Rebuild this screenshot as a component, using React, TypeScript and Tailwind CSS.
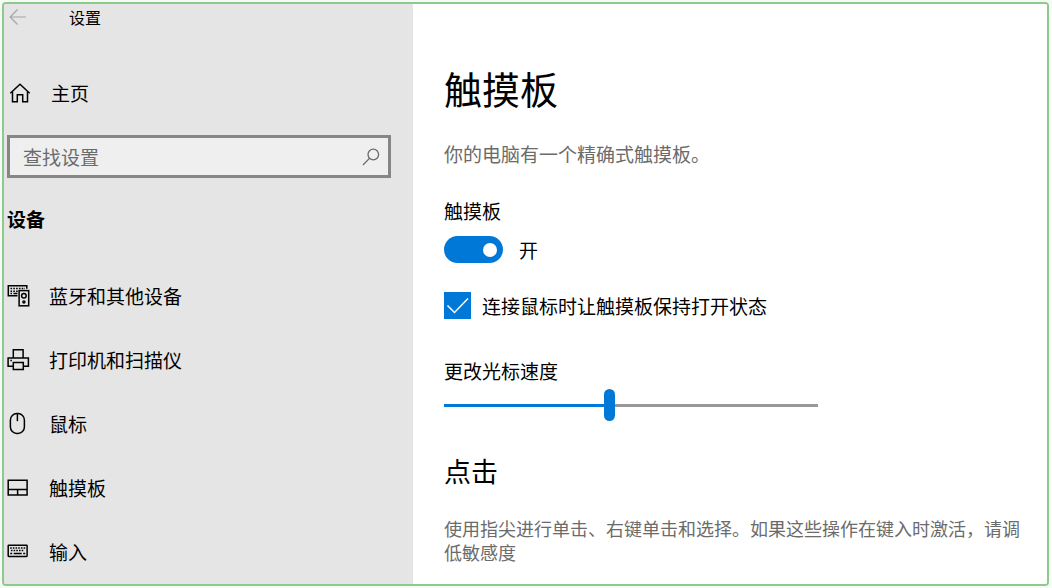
import React, { useState } from "react";

interface IconProps {
  className?: string;
}

const strokeProps = {
  fill: "none",
  stroke: "currentColor",
  strokeWidth: 1.5,
  "aria-hidden": true,
};

const BackIcon: React.FC<IconProps> = ({ className }) => (
  <svg viewBox="0 0 18 18" className={className} {...strokeProps} strokeWidth={1.2}>
    <path d="M17 9H1.5M8.5 1.5 1.2 9l7.3 7.5" />
  </svg>
);

const HomeIcon: React.FC<IconProps> = ({ className }) => (
  <svg viewBox="0 0 22 22" className={className} {...strokeProps}>
    <path d="M1.3 11.2 11 2.2l9.7 9M3.5 9.5v10.2h4.8v-6.9h5.4v6.9h4.8V9.5" />
  </svg>
);

const SearchIcon: React.FC<IconProps> = ({ className }) => (
  <svg viewBox="0 0 18 18" className={className} {...strokeProps} strokeWidth={1.3}>
    <circle cx="11.3" cy="6.5" r="5.3" />
    <path d="M7.4 10.4 1 17" />
  </svg>
);

const DevicesIcon: React.FC<IconProps> = ({ className }) => (
  <svg viewBox="0 0 24 24" className={className} {...strokeProps}>
    <path d="M10.5 11.8H1.3V1.8h18.5v3" />
    <path d="M3.5 4.5H18M3.5 7.2H11" strokeDasharray="1.6 1.2" />
    <path d="M3.5 9.5H5M6.5 9.5h4" />
    <rect x="12.1" y="6.6" width="9.6" height="15.2" />
    <circle cx="16.9" cy="11.8" r="2.3" />
    <circle cx="16.9" cy="17.9" r="1" />
  </svg>
);

const PrinterIcon: React.FC<IconProps> = ({ className }) => (
  <svg viewBox="0 0 24 24" className={className} {...strokeProps}>
    <path d="M6.3 10V1.7h9.8V10" />
    <path d="M6.3 18.3H1.1V10h20.3v8.3h-5.1" />
    <path d="M6.3 14.6h10v6.9h-10z" />
    <path d="M3.3 12.5h1.6" />
  </svg>
);

const MouseIcon: React.FC<IconProps> = ({ className }) => (
  <svg viewBox="0 0 24 24" className={className} {...strokeProps}>
    <rect x="3.4" y="1.6" width="14" height="19.8" rx="6.4" />
    <path d="M10.4 1.8v7.4" />
  </svg>
);

const TouchpadIcon: React.FC<IconProps> = ({ className }) => (
  <svg viewBox="0 0 24 24" className={className} {...strokeProps}>
    <path d="M1.2 4.2h18.9v14.7H1.2zM1.2 13.6h18.9M10.6 13.6v5.3" />
  </svg>
);

const KeyboardIcon: React.FC<IconProps> = ({ className }) => (
  <svg viewBox="0 0 24 24" className={className} {...strokeProps}>
    <rect x="1.2" y="5.2" width="18.9" height="11.2" rx="0.6" />
    <path d="M3.1 8h15.2M3.9 10.6h13.6" strokeDasharray="1.6 1.1" />
    <path d="M3.2 13.5h2M6.7 13.5h8M16.2 13.5h2" />
  </svg>
);

const navItems = [
  { label: "蓝牙和其他设备", Icon: DevicesIcon },
  { label: "打印机和扫描仪", Icon: PrinterIcon },
  { label: "鼠标", Icon: MouseIcon },
  { label: "触摸板", Icon: TouchpadIcon },
  { label: "输入", Icon: KeyboardIcon },
];

const Sidebar: React.FC = () => (
  <aside className="w-[409px] shrink-0 bg-[#e5e5e5]">
    <header className="flex h-[26px] items-center pl-[5px]">
      <button type="button" aria-label="返回" className="text-[#a6a6a6]">
        <BackIcon className="size-[18px]" />
      </button>
      <span className="ml-[42px] text-base leading-6">设置</span>
    </header>

    <a href="#home" className="mt-[47px] flex h-8 items-center gap-5 pl-[5px]">
      <HomeIcon className="size-[22px] shrink-0" />
      主页
    </a>

    <div className="mt-[26px] mr-[22px] ml-[3px] flex h-[43px] items-center border-3 border-[#868686] bg-[#efefef] pr-2 pl-[13px]">
      <input
        type="text"
        aria-label="查找设置"
        placeholder="查找设置"
        className="min-w-0 flex-1 bg-transparent outline-none placeholder:text-[#6b6b6b]"
      />
      <button type="button" aria-label="搜索" className="text-[#6b6b6b]">
        <SearchIcon className="size-[18px]" />
      </button>
    </div>

    <h2 className="mt-[29px] mb-[33px] pl-[3px] font-bold">设备</h2>

    <nav>
      {navItems.map(({ label, Icon }) => (
        <a
          key={label}
          href={`#${label}`}
          className="flex h-16 items-center gap-[18px] pl-[3px]"
        >
          <Icon className="size-6 shrink-0" />
          {label}
        </a>
      ))}
    </nav>
  </aside>
);

const TouchpadSettings: React.FC = () => {
  const [enabled, setEnabled] = useState(true);
  const [keepOn, setKeepOn] = useState(true);
  const [speed, setSpeed] = useState(44);

  return (
    <main className="min-w-0 flex-1 bg-white pt-14 pr-4 pl-[31px]">
      <h1 className="text-[38px] leading-14">触摸板</h1>
      <p className="mt-[26px] text-[#6b6b6b]">你的电脑有一个精确式触摸板。</p>

      <label htmlFor="touchpad" className="mt-[33px] block">
        触摸板
      </label>
      <div className="mt-[13px] flex items-center gap-4">
        <input
          id="touchpad"
          type="checkbox"
          role="switch"
          checked={enabled}
          onChange={(e) => setEnabled(e.target.checked)}
          className="flex h-[27px] w-[59px] appearance-none items-center rounded-full bg-[#999999] px-[6px] before:size-[14px] before:rounded-full before:bg-white checked:justify-end checked:bg-[#0078d7]"
        />
        <span>{enabled ? "开" : "关"}</span>
      </div>

      <label className="mt-[29px] flex items-center gap-[11px]">
        <span className="relative flex size-[27px] shrink-0">
          <input
            type="checkbox"
            checked={keepOn}
            onChange={(e) => setKeepOn(e.target.checked)}
            className="peer size-full appearance-none border-2 border-[#666666] checked:border-[#0078d7] checked:bg-[#0078d7]"
          />
          <svg
            viewBox="0 0 27 27"
            className="pointer-events-none absolute inset-0 hidden text-white peer-checked:block"
            {...strokeProps}
          >
            <path d="m3.5 13.5 7 7L24 6.5" />
          </svg>
        </span>
        连接鼠标时让触摸板保持打开状态
      </label>

      <label htmlFor="speed" className="mt-10 block">
        更改光标速度
      </label>
      <input
        id="speed"
        type="range"
        min={0}
        max={100}
        value={speed}
        onChange={(e) => setSpeed(Number(e.target.value))}
        style={{
          backgroundImage: `linear-gradient(to right, #0078d7 ${speed}%, #999999 ${speed}%)`,
        }}
        className="mt-[6px] block h-8 w-[374px] max-w-full appearance-none bg-[length:100%_3px] bg-center bg-no-repeat [&::-webkit-slider-thumb]:h-8 [&::-webkit-slider-thumb]:w-[11px] [&::-webkit-slider-thumb]:appearance-none [&::-webkit-slider-thumb]:rounded-full [&::-webkit-slider-thumb]:bg-[#0078d7]"
      />

      <h2 className="mt-8 text-[27px] leading-9">点击</h2>
      <p className="mt-[27px] text-lg leading-6 text-[#6b6b6b]">
        使用指尖进行单击、右键单击和选择。如果这些操作在键入时激活，请调低敏感度
      </p>
    </main>
  );
};

const App: React.FC = () => (
  <div className="flex min-h-screen bg-[#f6fbf6] p-[2px] pr-[3px] font-['Noto_Sans_CJK_SC',sans-serif] text-[19px] leading-6 text-black">
    <div className="flex flex-1 overflow-hidden rounded border-2 border-[#8ccb8c]">
      <Sidebar />
      <TouchpadSettings />
    </div>
  </div>
);

export default App;
